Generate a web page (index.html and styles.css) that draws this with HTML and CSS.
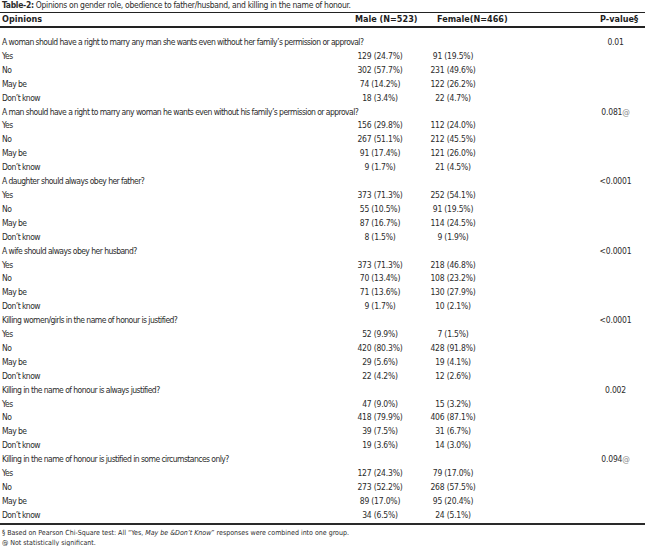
FILE: index.html
```html
<!DOCTYPE html>
<html lang="en">
<head>
<meta charset="utf-8">
<title>Table-2</title>
<link rel="stylesheet" href="styles.css">
</head>
<body>
<div class="page">
  <p class="caption"><b>Table-2:</b> Opinions on gender role, obedience to father/husband, and killing in the name of honour.</p>
  <table class="data">
    <colgroup>
      <col class="c-op"><col class="c-m"><col class="c-f"><col class="c-p">
    </colgroup>
    <thead>
      <tr>
        <th class="h-op">Opinions</th>
        <th class="h-m">Male (N=523)</th>
        <th class="h-f">Female(N=466)</th>
        <th class="h-p">P-value§</th>
      </tr>
    </thead>
    <tbody>
      <tr class="first q"><td>A woman should have a right to marry any man she wants even without her family’s permission or approval?</td><td></td><td></td><td class="p">0.01</td></tr>
      <tr><td>Yes</td><td class="n">129 (24.7%)</td><td class="n">91 (19.5%)</td><td></td></tr>
      <tr><td>No</td><td class="n">302 (57.7%)</td><td class="n">231 (49.6%)</td><td></td></tr>
      <tr><td>May be</td><td class="n">74 (14.2%)</td><td class="n">122 (26.2%)</td><td></td></tr>
      <tr><td>Don’t know</td><td class="n">18 (3.4%)</td><td class="n">22 (4.7%)</td><td></td></tr>

      <tr class="q"><td>A man should have a right to marry any woman he wants even without his family’s permission or approval?</td><td></td><td></td><td class="p">0.081<span class="at">@</span></td></tr>
      <tr><td>Yes</td><td class="n">156 (29.8%)</td><td class="n">112 (24.0%)</td><td></td></tr>
      <tr><td>No</td><td class="n">267 (51.1%)</td><td class="n">212 (45.5%)</td><td></td></tr>
      <tr><td>May be</td><td class="n">91 (17.4%)</td><td class="n">121 (26.0%)</td><td></td></tr>
      <tr><td>Don’t know</td><td class="n">9 (1.7%)</td><td class="n">21 (4.5%)</td><td></td></tr>

      <tr class="q"><td>A daughter should always obey her father?</td><td></td><td></td><td class="p">&lt;0.0001</td></tr>
      <tr><td>Yes</td><td class="n">373 (71.3%)</td><td class="n">252 (54.1%)</td><td></td></tr>
      <tr><td>No</td><td class="n">55 (10.5%)</td><td class="n">91 (19.5%)</td><td></td></tr>
      <tr><td>May be</td><td class="n">87 (16.7%)</td><td class="n">114 (24.5%)</td><td></td></tr>
      <tr><td>Don’t know</td><td class="n">8 (1.5%)</td><td class="n">9 (1.9%)</td><td></td></tr>

      <tr class="q"><td>A wife should always obey her husband?</td><td></td><td></td><td class="p">&lt;0.0001</td></tr>
      <tr><td>Yes</td><td class="n">373 (71.3%)</td><td class="n">218 (46.8%)</td><td></td></tr>
      <tr><td>No</td><td class="n">70 (13.4%)</td><td class="n">108 (23.2%)</td><td></td></tr>
      <tr><td>May be</td><td class="n">71 (13.6%)</td><td class="n">130 (27.9%)</td><td></td></tr>
      <tr><td>Don’t know</td><td class="n">9 (1.7%)</td><td class="n">10 (2.1%)</td><td></td></tr>

      <tr class="q"><td>Killing women/girls in the name of honour is justified?</td><td></td><td></td><td class="p">&lt;0.0001</td></tr>
      <tr><td>Yes</td><td class="n">52 (9.9%)</td><td class="n">7 (1.5%)</td><td></td></tr>
      <tr><td>No</td><td class="n">420 (80.3%)</td><td class="n">428 (91.8%)</td><td></td></tr>
      <tr><td>May be</td><td class="n">29 (5.6%)</td><td class="n">19 (4.1%)</td><td></td></tr>
      <tr><td>Don’t know</td><td class="n">22 (4.2%)</td><td class="n">12 (2.6%)</td><td></td></tr>

      <tr class="q"><td>Killing in the name of honour is always justified?</td><td></td><td></td><td class="p">0.002</td></tr>
      <tr><td>Yes</td><td class="n">47 (9.0%)</td><td class="n">15 (3.2%)</td><td></td></tr>
      <tr><td>No</td><td class="n">418 (79.9%)</td><td class="n">406 (87.1%)</td><td></td></tr>
      <tr><td>May be</td><td class="n">39 (7.5%)</td><td class="n">31 (6.7%)</td><td></td></tr>
      <tr><td>Don’t know</td><td class="n">19 (3.6%)</td><td class="n">14 (3.0%)</td><td></td></tr>

      <tr class="q"><td>Killing in the name of honour is justified in some circumstances only?</td><td></td><td></td><td class="p">0.094<span class="at">@</span></td></tr>
      <tr><td>Yes</td><td class="n">127 (24.3%)</td><td class="n">79 (17.0%)</td><td></td></tr>
      <tr><td>No</td><td class="n">273 (52.2%)</td><td class="n">268 (57.5%)</td><td></td></tr>
      <tr><td>May be</td><td class="n">89 (17.0%)</td><td class="n">95 (20.4%)</td><td></td></tr>
      <tr class="last"><td>Don’t know</td><td class="n">34 (6.5%)</td><td class="n">24 (5.1%)</td><td></td></tr>
    </tbody>
  </table>
  <div class="notes">
    <p>§ Based on Pearson Chi-Square test: All “Yes, <i>May be &amp;Don’t Know</i>” responses were combined into one group.</p>
    <p>@ Not statistically significant.</p>
  </div>
</div>
</body>
</html>
```

FILE: styles.css
```css
html, body {
  margin: 0;
  padding: 0;
  background: #ffffff;
}

body {
  font-family: "DejaVu Sans Condensed", "DejaVu Sans", sans-serif;
  font-stretch: condensed;
  font-size: 8.5px;
  color: #2b2b2b;
}

.page {
  width: 645px;
}

.caption {
  margin: 0;
  padding-left: 2px;
  height: 12px;
  line-height: 11px;
  letter-spacing: -0.3px;
  white-space: nowrap;
}

.data {
  width: 645px;
  border-collapse: collapse;
  table-layout: fixed;
  border-top: 1px solid #222;
}

.c-op { width: 350px; }
.c-m  { width: 60px; }
.c-f  { width: 86px; }
.c-p  { width: 149px; }

.data th {
  font-size: 9px;
  font-weight: bold;
  text-align: left;
  white-space: nowrap;
  height: 13px;
  padding: 0;
  line-height: 13px;
  color: #1e1e1e;
  border-bottom: 2px solid #222;
}

.data th.h-op { padding-left: 2px; }
.data th.h-m  { padding-left: 5px; }
.data th.h-f  { padding-left: 27px; }
.data th.h-p  { padding-left: 104px; }

.data td {
  padding: 0;
  height: 13.9px;
  line-height: 13.9px;
  white-space: nowrap;
  vertical-align: middle;
  letter-spacing: -0.55px;
}

.data td:first-child {
  padding-left: 2px;
}

.data tr.first td {
  padding-top: 8px;
}

.data tr.last td {
  border-bottom: 2.5px solid #2a2a2a;
}

.data td.n {
  text-align: center;
  letter-spacing: -0.2px;
}

.data td.p {
  text-align: center;
  padding-left: 90px;
  letter-spacing: -0.2px;
}

.at {
  color: #8a8a8a;
}

.notes {
  padding-top: 3px;
  padding-left: 2px;
}

.notes p {
  margin: 0;
  font-size: 7px;
  line-height: 10px;
  white-space: nowrap;
}
```
